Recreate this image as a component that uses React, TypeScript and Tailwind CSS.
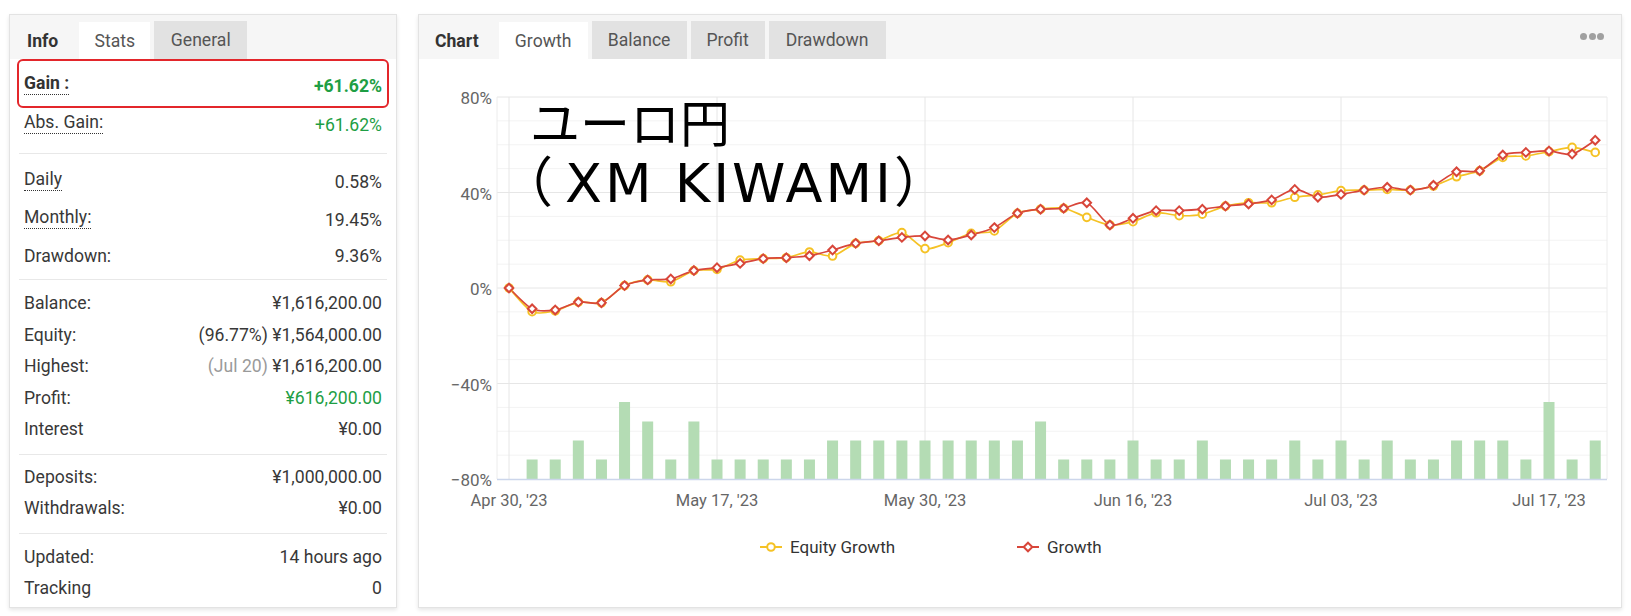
import React from "react";

const RED = [0, -8.7, -9.2, -5.9, -6.2, 1.0, 3.4, 3.8, 7.3, 8.5, 10.3, 12.3, 12.7, 13.5, 15.9, 18.7, 19.8, 21.2, 21.8, 20.1, 22.2, 25.3, 31.3, 33.0, 33.4, 35.7, 26.4, 29.2, 32.4, 32.4, 33.0, 34.3, 35.2, 36.9, 41.3, 38.0, 39.2, 41.0, 42.2, 41.0, 43.0, 48.7, 49.1, 55.7, 56.8, 57.4, 56.1, 61.9];
const YOVR: Record<number, number> = {1: -9.9, 2: -9.6, 7: 2.6, 9: 7.8, 10: 11.7, 13: 15.1, 14: 13.4, 17: 23.2, 18: 16.5, 19: 19.0, 20: 22.9, 21: 23.9, 25: 29.6, 27: 27.8, 28: 31.5, 29: 30.3, 30: 30.9, 32: 35.7, 33: 35.7, 34: 38.0, 35: 39.0, 36: 40.8, 38: 41.3, 40: 42.7, 41: 46.6, 43: 54.7, 44: 55.3, 45: 57.1, 46: 58.9, 47: 56.8};
const YEL = RED.map((v, i) => (YOVR[i] !== undefined ? YOVR[i] : v));
const BARS = [1, 1, 2, 1, 4, 3, 1, 3, 1, 1, 1, 1, 1, 2, 2, 2, 2, 2, 2, 2, 2, 2, 3, 1, 1, 1, 2, 1, 1, 2, 1, 1, 1, 2, 1, 2, 1, 2, 1, 1, 2, 2, 2, 1, 4, 1, 2];
const BAR_H = [0, 19.5, 38.5, 57.5, 77];

const X0 = 509;
const DX = 1040 / 45;
const px = (i: number) => X0 + DX * i;
const py = (v: number) => 288 - v * 2.3875;

const RED_C = "#d8463a";
const YEL_C = "#f5c225";

function splinePath(vals: number[]) {
  const pts = vals.map((v, i) => ({ x: px(i), y: py(v) }));
  const t = 0.14;
  let d = `M${pts[0].x.toFixed(2)},${pts[0].y.toFixed(2)}`;
  for (let i = 0; i < pts.length - 1; i++) {
    const p0 = pts[i - 1] || pts[i];
    const p1 = pts[i];
    const p2 = pts[i + 1];
    const p3 = pts[i + 2] || p2;
    const c1x = p1.x + (p2.x - p0.x) * t;
    const c1y = p1.y + (p2.y - p0.y) * t;
    const c2x = p2.x - (p3.x - p1.x) * t;
    const c2y = p2.y - (p3.y - p1.y) * t;
    d += ` C${c1x.toFixed(2)},${c1y.toFixed(2)} ${c2x.toFixed(2)},${c2y.toFixed(2)} ${p2.x.toFixed(2)},${p2.y.toFixed(2)}`;
  }
  return d;
}

function Diamond({ x, y }: { x: number; y: number }) {
  const r = 4.3;
  return <path d={`M${x},${y - r} L${x + r},${y} L${x},${y + r} L${x - r},${y} Z`} fill="#fff" stroke={RED_C} strokeWidth={2} />;
}

function Circle({ x, y }: { x: number; y: number }) {
  return <circle cx={x} cy={y} r={3.8} fill="#fff" stroke={YEL_C} strokeWidth={2} />;
}

function Chart() {
  const minor: number[] = [];
  for (let v = -70; v <= 70; v += 10) minor.push(v);
  const xl = [
    { i: 0, t: "Apr 30, '23" },
    { i: 9, t: "May 17, '23" },
    { i: 18, t: "May 30, '23" },
    { i: 27, t: "Jun 16, '23" },
    { i: 36, t: "Jul 03, '23" },
    { i: 45, t: "Jul 17, '23" },
  ];
  const yl = [
    { v: 80, t: "80%" },
    { v: 40, t: "40%" },
    { v: 0, t: "0%" },
    { v: -40, t: "\u221240%" },
    { v: -80, t: "\u221280%" },
  ];
  return (
    <svg width={1202} height={548} className="block">
      <g transform="translate(-419 -59)">
        {minor.map((v) => (
          <line key={v} x1={497} x2={1607} y1={py(v)} y2={py(v)} stroke={v % 40 === 0 ? "#e6e6e6" : "#f3f3f3"} strokeWidth={1} />
        ))}
        <line x1={497} x2={1607} y1={py(80)} y2={py(80)} stroke="#e6e6e6" />
        <line x1={497} x2={497} y1={97} y2={479} stroke="#ececec" />
        <line x1={1607} x2={1607} y1={97} y2={479} stroke="#ececec" />
        {xl.map((l) => (
          <line key={l.i} x1={px(l.i)} x2={px(l.i)} y1={97} y2={479} stroke="#e6e6e6" />
        ))}
        {BARS.map((b, k) => {
          const i = k + 1;
          const h = BAR_H[b];
          return <rect key={i} x={px(i) - 5.5} y={479 - h} width={11} height={h} fill="#b4dcb4" />;
        })}
        <line x1={497} x2={1607} y1={479.5} y2={479.5} stroke="#ccd6eb" strokeWidth={1.5} />
        <path d={splinePath(YEL)} fill="none" stroke={YEL_C} strokeWidth={1.7} />
        <path d={splinePath(RED)} fill="none" stroke={RED_C} strokeWidth={1.7} />
        {YEL.map((v, i) => (
          <Circle key={i} x={px(i)} y={py(v)} />
        ))}
        {RED.map((v, i) => (
          <Diamond key={i} x={px(i)} y={py(v)} />
        ))}
        {yl.map((l) => (
          <text key={l.v} x={492} y={py(l.v) + 7} textAnchor="end" fontSize={17} fill="#666">
            {l.t}
          </text>
        ))}
        {xl.map((l) => (
          <text key={l.i} x={px(l.i)} y={506} textAnchor="middle" fontSize={16.5} fill="#666">
            {l.t}
          </text>
        ))}
        <line x1={760} x2={782} y1={547} y2={547} stroke={YEL_C} strokeWidth={2} />
        <Circle x={771} y={547} />
        <text x={790} y={553} fontSize={17} fill="#333">Equity Growth</text>
        <line x1={1017} x2={1039} y1={547} y2={547} stroke={RED_C} strokeWidth={2} />
        <Diamond x={1028} y={547} />
        <text x={1047} y={553} fontSize={17} fill="#333">Growth</text>
      </g>
    </svg>
  );
}

function LeftCard() {
  const ul = "mb-[2px] border-b border-dotted border-[#333]";
  return (
    <div className="h-[594px] w-[388px] shrink-0 border border-[#e3e3e3] bg-white text-[17.6px] leading-[22px] text-[#383838] shadow-[0_2px_4px_rgba(0,0,0,0.10)]">
      <div className="flex h-[44px] items-end bg-[#f6f6f6] pl-[17px]">
        <div className="mr-[21px] flex h-[37px] items-center font-bold text-[#333]">Info</div>
        <div className="flex h-[37px] w-[71px] items-center justify-center bg-white text-[#555]">Stats</div>
        <div className="ml-[4px] flex h-[38px] w-[93px] items-center justify-center bg-[#e2e2e2] text-[#555]">General</div>
      </div>

      <div className="mx-[7px] flex h-[49px] items-end justify-between rounded-[6px] border-2 border-[#e3262b] px-[5px] pb-[9px]">
        <span className={`${ul} font-bold text-[#333]`}>Gain :</span>
        <span className="font-bold text-[#1e9e44]">+61.62%</span>
      </div>
      <div className="flex items-end justify-between px-[14px] pb-[17px] pt-[3px]">
        <span className={ul}>Abs. Gain:</span>
        <span className="text-[#1e9e44]">+61.62%</span>
      </div>
      <div className="mx-[9px] h-px bg-[#e8e8e8]" />

      <div className="flex flex-col px-[14px] pb-[12px] pt-[14px]">
        <div className="flex items-end justify-between">
          <span className={ul}>Daily</span>
          <span>0.58%</span>
        </div>
        <div className="mt-[13px] flex items-end justify-between">
          <span className={ul}>Monthly:</span>
          <span>19.45%</span>
        </div>
        <div className="mt-[14px] flex items-end justify-between">
          <span>Drawdown:</span>
          <span>9.36%</span>
        </div>
      </div>
      <div className="mx-[9px] h-px bg-[#e8e8e8]" />

      <div className="flex flex-col gap-[9.5px] px-[14px] pb-[14px] pt-[12px]">
        <div className="flex justify-between">
          <span>Balance:</span>
          <span>¥1,616,200.00</span>
        </div>
        <div className="flex justify-between">
          <span>Equity:</span>
          <span>(96.77%) ¥1,564,000.00</span>
        </div>
        <div className="flex justify-between">
          <span>Highest:</span>
          <span>
            <span className="text-[#9a9a9a]">(Jul 20)</span> ¥1,616,200.00
          </span>
        </div>
        <div className="flex justify-between">
          <span>Profit:</span>
          <span className="text-[#1e9e44]">¥616,200.00</span>
        </div>
        <div className="flex justify-between">
          <span>Interest</span>
          <span>¥0.00</span>
        </div>
      </div>
      <div className="mx-[9px] h-px bg-[#e8e8e8]" />

      <div className="flex flex-col gap-[9px] px-[14px] pb-[14px] pt-[11px]">
        <div className="flex justify-between">
          <span>Deposits:</span>
          <span>¥1,000,000.00</span>
        </div>
        <div className="flex justify-between">
          <span>Withdrawals:</span>
          <span>¥0.00</span>
        </div>
      </div>
      <div className="mx-[9px] h-px bg-[#e8e8e8]" />

      <div className="flex flex-col gap-[9px] px-[14px] pb-[8px] pt-[12px]">
        <div className="flex justify-between">
          <span>Updated:</span>
          <span>14 hours ago</span>
        </div>
        <div className="flex justify-between">
          <span>Tracking</span>
          <span>0</span>
        </div>
      </div>
    </div>
  );
}

function RightCard() {
  return (
    <div className="h-[594px] w-[1204px] shrink-0 border border-[#e3e3e3] bg-white text-[17.6px] leading-[22px] text-[#333] shadow-[0_2px_4px_rgba(0,0,0,0.10)]">
      <div className="flex h-[44px] items-end bg-[#f6f6f6] pl-[16px] pr-[17px]">
        <div className="mr-[20px] flex h-[37px] items-center font-bold text-[#333]">Chart</div>
        <div className="flex h-[37px] w-[89px] items-center justify-center bg-white text-[#555]">Growth</div>
        <div className="ml-[4px] flex h-[38px] w-[95px] items-center justify-center bg-[#e2e2e2] text-[#555]">Balance</div>
        <div className="ml-[4px] flex h-[38px] w-[74px] items-center justify-center bg-[#e2e2e2] text-[#555]">Profit</div>
        <div className="ml-[4px] flex h-[38px] w-[117px] items-center justify-center bg-[#e2e2e2] text-[#555]">Drawdown</div>
        <div className="mb-[19px] ml-auto flex gap-[1.5px]">
          <span className="h-[7px] w-[7px] rounded-full bg-[#a0a0a0]" />
          <span className="h-[7px] w-[7px] rounded-full bg-[#a0a0a0]" />
          <span className="h-[7px] w-[7px] rounded-full bg-[#a0a0a0]" />
        </div>
      </div>
      <div className="relative">
        <Chart />
        <div className="absolute left-[111px] top-[39px] font-['DejaVu_Sans','Noto_Sans_CJK_JP',sans-serif] text-[50px] leading-[54px] text-black">
          <div>ユーロ円</div>
          <div className="-ml-[4px] whitespace-nowrap text-[54px] leading-[54px] tracking-[3px]">
            <span className="mr-[12px] font-['Noto_Sans_CJK_JP',sans-serif] tracking-normal [font-feature-settings:'halt']">（</span>
            XM KIWAMI
            <span className="font-['Noto_Sans_CJK_JP',sans-serif] tracking-normal [font-feature-settings:'halt']">）</span>
          </div>
        </div>
      </div>
    </div>
  );
}

export default function App() {
  return (
    <div className="min-h-screen bg-white font-['Roboto',sans-serif]">
      <div className="flex gap-[21px] pl-[9px] pt-[14px]">
        <LeftCard />
        <RightCard />
      </div>
    </div>
  );
}
